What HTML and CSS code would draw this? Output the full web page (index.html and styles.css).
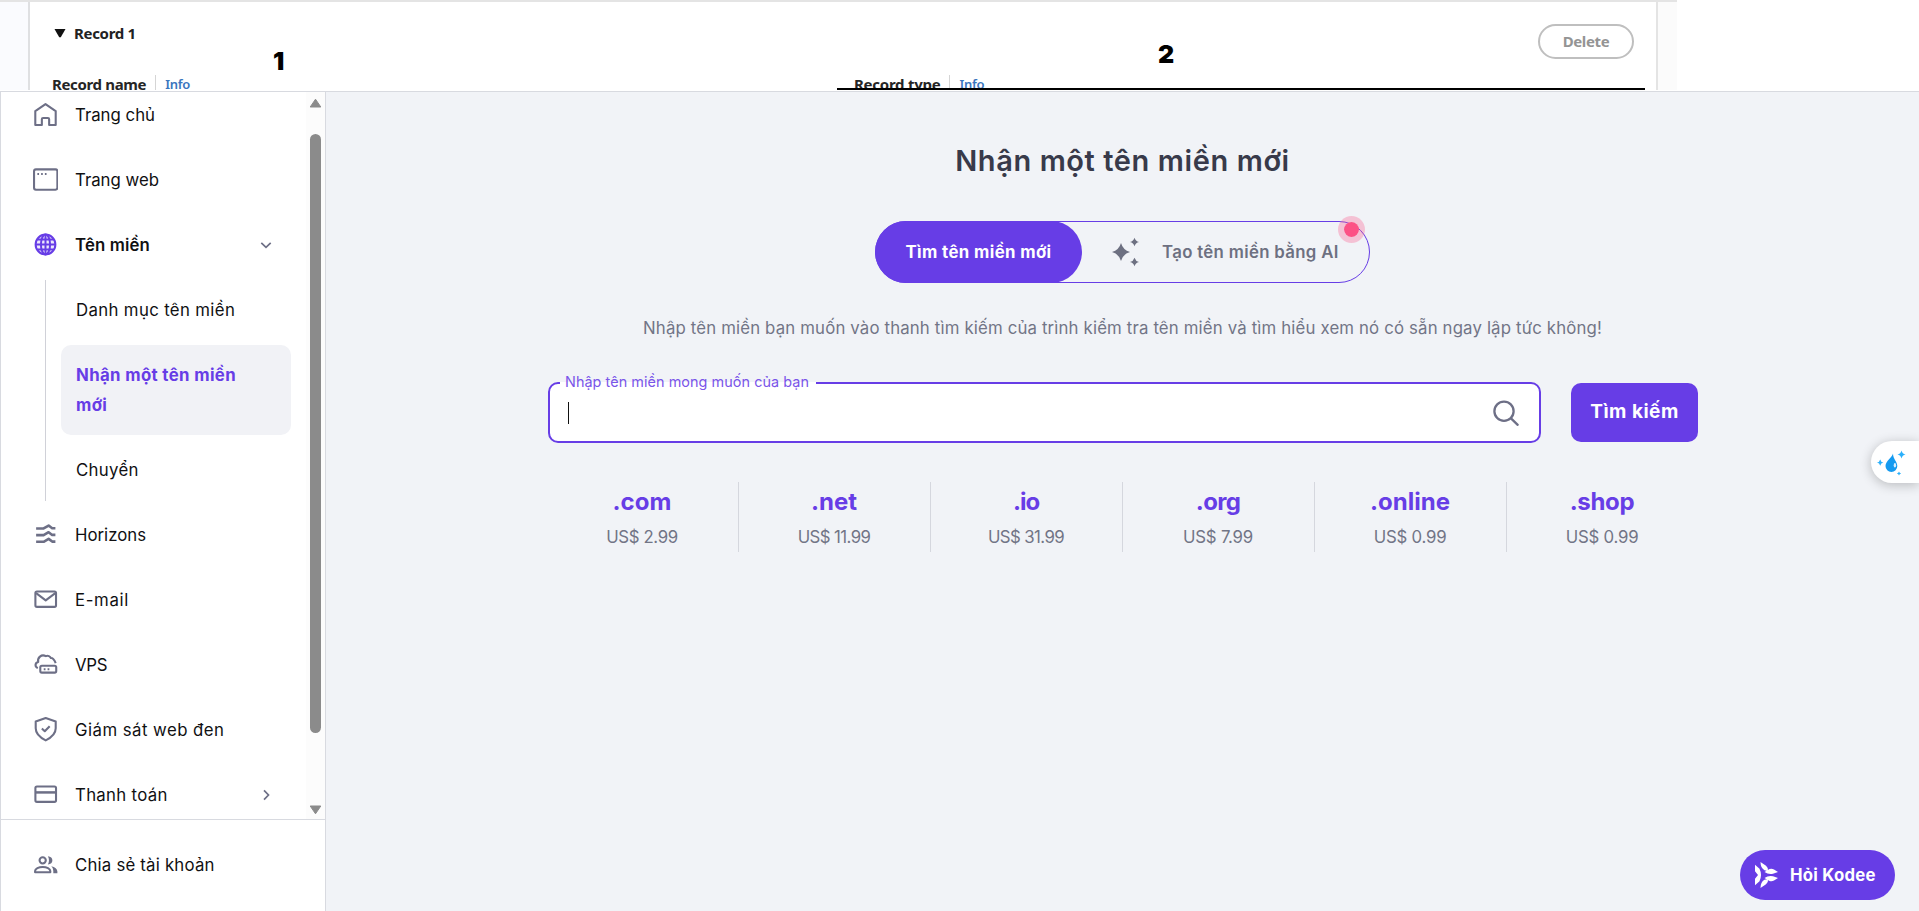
FILE: index.html
```html
<!DOCTYPE html>
<html lang="vi">
<head>
<meta charset="utf-8">
<title>Nhận một tên miền mới</title>
<link rel="stylesheet" href="styles.css">
</head>
<body>
<div class="page">
  <header class="strip">
    <div class="gutter-left"></div>
    <section class="record record-name">
      <div class="record-title"><svg width="12" height="10" viewBox="0 0 12 10"><path d="M.5 1h11L6.800 9.300H5.200z" fill="#111"/></svg><span>Record 1</span></div>
      <div class="field"><span class="field-label">Record name</span><span class="info">Info</span></div>
      <span class="mark mark-one">1</span>
    </section>
    <section class="record record-type">
      <button class="delete">Delete</button>
      <div class="field"><span class="field-label type">Record type</span><span class="info">Info</span></div>
      <span class="mark mark-two">2</span>
      <div class="underline"></div>
    </section>
    <div class="gutter-right"></div>
  </header>

  <div class="app">
    <aside class="sidebar">
      <div class="scroll">
        <nav class="nav">
          <a class="item s-home"><svg class="icon" viewBox="0 0 24 24"><path d="M2.200 22.100V8.700L12 2l9.800 6.700v13.400h-6.300v-5.600q0-1.200-1.200-1.200H9.700q-1.200 0-1.200 1.200v5.600z"/></svg><span>Trang chủ</span></a>
          <a class="item s-web"><svg class="icon" viewBox="0 0 24 24"><rect x="1" y="2.300" width="22.400" height="19.500" rx="1.800"/><path d="M4.200 6.700h1.600M7.800 6.700h1.600M11.400 6.700H13"/></svg><span>Trang web</span></a>
          <a class="item s-domain open"><svg class="icon globe" viewBox="0 0 24 24"><circle cx="12" cy="12" r="9.500"/><ellipse cx="12" cy="12" rx="4.400" ry="9.500"/><path d="M12 2.500v19M2.500 12h19M4 7.300h16M4 16.700h16"/></svg><span>Tên miền</span><svg class="chev" viewBox="0 0 16 16"><path d="M3.300 5.800L8 10.300l4.700-4.500"/></svg></a>
          <div class="sub">
            <a class="subitem s-list">Danh mục tên miền</a>
            <a class="subitem active">Nhận một tên miền<br>mới</a>
            <a class="subitem s-move">Chuyển</a>
          </div>
          <a class="item s-horizons"><svg class="icon" viewBox="0 0 24 24"><g stroke-width="2.500"><path d="M3 6.200h7.200L15 3.400l3.400 2.600H21.500"/><path d="M3 12.600h7.200l4.800-2.800 3.400 2.600h3.100"/><path d="M3 19h7.200l4.800-2.800 3.400 2.600h3.100"/></g></svg><span>Horizons</span></a>
          <a class="item s-mail"><svg class="icon" viewBox="0 0 24 24"><rect x="2.300" y="4.300" width="19.800" height="14.800" rx="1.500"/><path d="M3 5.900l9.200 7 9.200-7"/></svg><span>E-mail</span></a>
          <a class="item s-vps"><svg class="icon" viewBox="0 0 24 24"><path d="M4.600 15.500C1.600 14.200 1.700 10.400 5 9.600 4 5.600 8 1.600 12.400 4c2-.9 4 .2 4.800 1.700 2.300-.2 3.500 2.200 4.600 5"/><rect x="7" y="13.200" width="15.300" height="6.600" rx="1.500"/><path d="M10.300 16.500h1.700M14 16.500h1.700"/></svg><span>VPS</span></a>
          <a class="item s-dark"><svg class="icon" viewBox="0 0 24 24"><path d="M12.200 1l9.600 3.400v6.500c0 4.800-3.600 8.700-9.600 11.500-6-2.800-9.600-6.700-9.600-11.500V4.400z"/><path d="M8.500 11.100l2.800 2.600 4.700-4.900"/></svg><span>Giám sát web đen</span></a>
          <a class="item s-pay"><svg class="icon" viewBox="0 0 24 24"><rect x="2.300" y="4.300" width="19.800" height="14.800" rx="1.500"/><path d="M2.300 10h19.800" stroke-width="2.400"/></svg><span>Thanh toán</span><svg class="chev" viewBox="0 0 16 16"><path d="M6 3.300L10.500 8 6 12.700"/></svg></a>
        </nav>
        <div class="scrollbar">
          <svg width="13" height="10" viewBox="0 0 13 10"><path d="M6.500 1.200L11.800 9H1.200z"/></svg>
          <div class="thumb"></div>
          <svg width="13" height="10" viewBox="0 0 13 10"><path d="M6.500 8.800L11.800 1H1.200z"/></svg>
        </div>
      </div>
      <div class="side-foot">
        <a class="item s-share"><svg class="icon" viewBox="0 0 24 24"><circle cx="9.300" cy="8" r="3"/><path d="M2 19.400v-1.100c0-2.300 3.500-3.900 7.300-3.900s7.300 1.600 7.300 3.900v1.100z"/><path d="M14.300 4c2.800.2 4.300 1.700 4.300 4s-1.500 3.800-4.300 4c1.400-2.300 1.400-5.700 0-8zM17.500 13.600c3.600.8 5.900 2.500 5.900 5v1.900h-3.900v-1.900c0-2-.6-3.700-2-5z" fill="#6d6f86" stroke="none"/></svg><span>Chia sẻ tài khoản</span></a>
      </div>
    </aside>

    <main class="main">
      <h1>Nhận một tên miền mới</h1>
      <div class="toggle">
        <button class="tab tab-on">Tìm tên miền mới</button>
        <button class="tab tab-ai"><svg width="30" height="30" viewBox="0 0 30 30"><path d="M10 6Q12 13 19 15q-7 2-9 9-2-7-9-9 7-2 9-9zM23.500.8Q24.500 4.200 28 5q-3.500.9-4.500 4.300Q22.500 5.900 19 5q3.500-.8 4.500-4.200zM23.500 20.700q1 3.400 4.500 4.300-3.500.9-4.500 4.300-1-3.400-4.500-4.300 3.500-.9 4.500-4.300z"/></svg><span>Tạo tên miền bằng AI</span></button>
        <i class="dot"></i>
      </div>
      <p class="lead">Nhập tên miền bạn muốn vào thanh tìm kiếm của trình kiểm tra tên miền và tìm hiểu xem nó có sẵn ngay lập tức không!</p>
      <div class="search">
        <div class="input">
          <span class="float-label">Nhập tên miền mong muốn của bạn</span>
          <span class="caret"></span>
          <svg width="30" height="30" viewBox="0 0 30 30"><circle cx="13" cy="13.200" r="9.600"/><path d="M20 20.300l6.700 6.500"/></svg>
        </div>
        <button class="go">Tìm kiếm</button>
      </div>
      <div class="tlds">
        <div class="tld"><b class="t-com">.com</b><span class="p-299">US$ 2.99</span></div>
        <div class="tld"><b class="t-net">.net</b><span class="p-wide">US$ 11.99</span></div>
        <div class="tld"><b class="t-io">.io</b><span class="p-wide">US$ 31.99</span></div>
        <div class="tld"><b class="t-org">.org</b><span>US$ 7.99</span></div>
        <div class="tld"><b class="t-online">.online</b><span>US$ 0.99</span></div>
        <div class="tld"><b class="t-shop">.shop</b><span>US$ 0.99</span></div>
      </div>
    </main>
  </div>

  <div class="drop"><svg width="30" height="26" viewBox="0 0 30 26"><path d="M17 3.500C16.500 7 9.500 11 9.500 16a5.900 5.900 0 0 0 11.800 0C21.300 11.500 17 9 17 3.500z" fill="#149af0"/><ellipse cx="18.900" cy="15.300" rx="1.200" ry="2.200" fill="#d9efff"/><path d="M25.500.5q.8 3.500 4 4-3.200.6-4 4-.8-3.400-4-4 3.200-.5 4-4zM4.200 9.500q.6 2.600 3.200 3.100-2.600.6-3.200 3.100-.6-2.500-3.200-3.100 2.600-.5 3.200-3.100zM23 21.500q.4 1.700 2.100 2-1.700.4-2.100 2-.4-1.600-2.100-2 1.700-.3 2.100-2z" fill="#2bb0fb"/></svg></div>
  <button class="kodee"><svg width="26" height="28" viewBox="0 0 26 28"><path d="M1 3.800l4.500 4q3 6.200 0 12.400l-4.500 4v-6.400L4 14 1 10.200zM6.500 1l5.500 3.800q2.500 2 2 5.200l-3.500-.8Q6.500 7 6.500 1zM6.500 27l5.500-3.800q2.500-2 2-5.200l-3.500.8q-4 2.200-4 8.200zM10.500 11l5-3q2.500-.8 4.500.5l4 2.500-5 1.700q-4.500 1-8.500-1.700zM10.500 17l5 3q2.500.8 4.500-.5l4-2.500-5-1.700q-4.500-1-8.500 1.700z"/></svg><span>Hỏi Kodee</span></button>
</div>
</body>
</html>
```
FILE: styles.css
```css
* { box-sizing: border-box; }
body { margin: 0; background: #fff; font-family: Inter, "Open Sans", sans-serif; font-size: 16.8px; color: #1d1e20; }
button { font: inherit; border: 0; padding: 0; margin: 0; }
h1, p { margin: 0; }
.page { position: relative; width: 1919px; height: 911px; overflow: hidden; display: flex; flex-direction: column; }

/* Record strip */
.strip { display: flex; width: 1677px; height: 90px; margin-bottom: 1px; border-top: 2px solid #e4e4e4; font-family: "Noto Sans", sans-serif; overflow: hidden; }
.gutter-left { width: 30px; border-right: 2px solid #dfe0e2; background: #fafbfe; }
.gutter-right { width: 21px; border-left: 2px solid #e4e4e4; background: #fbfbfb; }
.record { position: relative; }
.record-name { width: 807px; padding: 21px 0 0 22px; }
.record-type { width: 819px; padding-left: 17px; display: flex; flex-direction: column; }
.record-title { display: flex; align-items: center; gap: 8px; height: 20px; padding-left: 2px; font-size: 15px; font-weight: 700; letter-spacing: -.32px; color: #222; }
.field { display: flex; align-items: center; height: 18px; margin-top: 32px; font-size: 15px; font-weight: 700; line-height: 18px; }
.record-type .field { margin-top: 16px; }
.field-label { letter-spacing: -.35px; color: #252525; padding-right: 9px; border-right: 1px solid #d5d5d5; }
.field-label.type { letter-spacing: -.25px; }
.info { padding-left: 9px; font-size: 13px; letter-spacing: -.3px; color: #3a76be; font-weight: 600; }
.delete { flex: none; align-self: flex-end; margin: 22px 22px 0 0; width: 96px; height: 35px; border: 2px solid #bfbfbf; border-radius: 18px; background: #fff; color: #949494; font: 700 15px "Noto Sans", sans-serif; letter-spacing: -.36px; padding-bottom: 2px; }
.mark { position: absolute; font: 900 25px/25px Inter, sans-serif; color: #000; }
.mark-one { left: 243px; top: 47px; }
.mark-two { left: 321px; top: 40px; }
.underline { position: absolute; left: 0; top: 86px; width: 808px; height: 2px; background: #000; }

/* Application frame */
.app { display: flex; flex: 1; border-top: 1px solid #d8dae0; border-left: 1px solid #d8dae0; }
.sidebar { width: 325px; border-right: 1px solid #d8dae0; display: flex; flex-direction: column; background: #fff; }
.scroll { display: flex; height: 727px; overflow: hidden; }
.nav { width: 305px; margin-top: -10px; padding-left: 32px; }
.item { display: flex; align-items: center; height: 65px; color: #101012; }
.icon { width: 25px; height: 25px; margin-right: 17px; fill: none; stroke: #6d6f86; stroke-width: 2; stroke-linejoin: round; }
.globe { stroke: #673de6; stroke-width: 1.900; fill: #ece7fc; }
.open { font-weight: 600; }
.chev { width: 16px; height: 16px; margin: 0 32px 0 auto; fill: none; stroke: #6d6f86; stroke-width: 1.700; }
.sub { margin: 3px 0 1px 12px; padding-left: 15px; height: 221px; border-left: 1px solid #d0d1d8; }
.subitem { display: block; width: 230px; padding: 15px; margin-bottom: 5px; line-height: 30px; color: #101012; }
.active { background: #f1f2f6; border-radius: 10px; color: #673de6; font-weight: 700; letter-spacing: .36px; }
.s-home, .s-web, .s-horizons { letter-spacing: 0; }
.s-domain { letter-spacing: .14px; }
.s-list { letter-spacing: .35px; }
.s-move { letter-spacing: .3px; }
.s-mail { letter-spacing: .65px; }
.s-vps { letter-spacing: -.3px; }
.s-dark { letter-spacing: .46px; }
.s-pay { letter-spacing: .3px; }
.s-share { letter-spacing: .2px; }
.scrollbar { width: 19px; padding: 6px 0 4px; display: flex; flex-direction: column; align-items: center; background: #fcfcfc; }
.scrollbar svg { fill: #8b8b8b; stroke: #8b8b8b; stroke-linejoin: round; }
.thumb { width: 11px; height: 599px; margin: 26px 0 auto; border-radius: 6px; background: #8b8b8b; }
.side-foot { flex: 1; border-top: 1px solid #d8dae0; padding: 12px 0 0 32px; }

/* Domain search */
.main { flex: 1; display: flex; flex-direction: column; align-items: center; background: #f1f3f7; padding-top: 47px; }
h1 { font-size: 29px; line-height: 44px; font-weight: 600; letter-spacing: .59px; color: #383a4a; }
.toggle { position: relative; display: flex; width: 495px; height: 62px; margin-top: 38px; border: 1px solid #673de6; border-radius: 31px; }
.tab { display: flex; align-items: center; background: none; white-space: nowrap; }
.tab-on { justify-content: center; width: 207px; margin: -1px 0 -1px -1px; border-radius: 31px; background: #673de6; color: #fff; font-weight: 700; letter-spacing: .38px; }
.tab-ai { padding-left: 29px; gap: 21px; color: #6d7081; font-weight: 600; letter-spacing: .33px; }
.tab-ai svg { fill: #6d7081; }
.dot { position: absolute; left: 462px; top: -6px; width: 27px; height: 27px; border: 6px solid rgba(252,81,133,.3); border-radius: 50%; background: #fc5185; background-clip: padding-box; }
.lead { margin-top: 30px; line-height: 30px; letter-spacing: .155px; color: #727586; white-space: nowrap; }
.search { display: flex; gap: 30px; margin: 39px 0 0 1px; width: 1150px; align-items: center; }
.input { position: relative; display: flex; align-items: center; justify-content: space-between; width: 993px; height: 61px; padding: 0 18px; border: 2px solid #673de6; border-radius: 10px; background: #fff; }
.input svg { fill: none; stroke: #6d6f86; stroke-width: 2.300; stroke-linecap: round; }
.float-label { position: absolute; left: 10px; top: -12px; padding: 0 7px 0 5px; font-size: 14.400px; line-height: 20px; letter-spacing: .06px; color: #7a55e9; white-space: nowrap; background: linear-gradient(#f1f3f7 50%, #fff 50%); }
.caret { width: 1px; height: 22px; background: #111; }
.go { width: 127px; height: 59px; border-radius: 10px; background: #673de6; color: #fff; font-size: 19px; font-weight: 700; letter-spacing: .5px; padding-bottom: 2px; }
.tlds { display: flex; width: 1152px; height: 70px; margin: 39px 2px 0 0; }
.tld { flex: 1; display: flex; flex-direction: column; align-items: center; border-left: 1px solid #d5d7de; color: #727586; letter-spacing: -.22px; }
.tld:first-child { border-color: transparent; }
.tld b { font-size: 24px; line-height: 30px; padding-top: 5px; font-weight: 700; color: #673de6; }
.tld span { line-height: 30px; margin-top: 5px; }
.tld .t-com { letter-spacing: .08px; }
.tld .t-io { letter-spacing: -1px; }
.tld .t-org { letter-spacing: -.69px; }
.tld .t-net, .tld .t-online { letter-spacing: 0; }
.tld .t-shop { letter-spacing: -.3px; }
.tld .p-299 { letter-spacing: -.36px; }
.tld .p-wide { letter-spacing: -.58px; }

/* Floating widgets */
.drop { position: absolute; right: 0; top: 441px; width: 48px; height: 42px; padding: 9px 0 0 5px; border-radius: 21px 0 0 21px; background: #fff; box-shadow: 0 2px 12px rgba(0,0,0,.24); }
.kodee { position: absolute; left: 1740px; top: 850px; width: 155px; height: 50px; display: flex; align-items: center; gap: 10px; padding-left: 14px; border-radius: 25px; background: #673de6; color: #fff; font-weight: 700; letter-spacing: .23px; white-space: nowrap; }
.kodee svg { fill: #fff; }
```
